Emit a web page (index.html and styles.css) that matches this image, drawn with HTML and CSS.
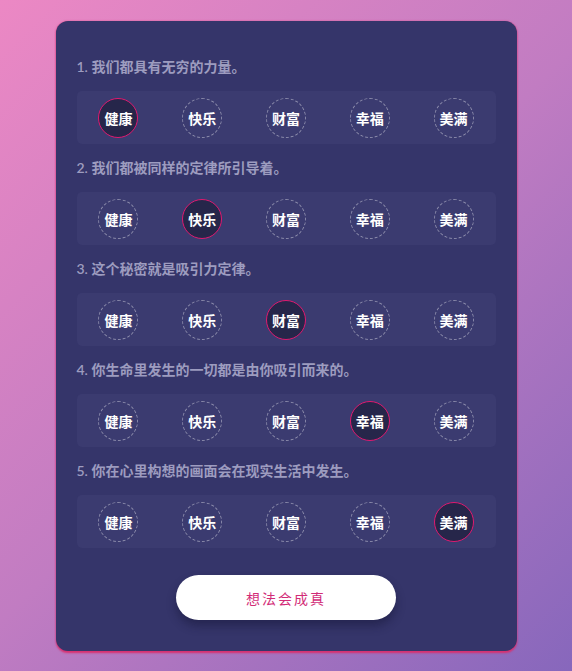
FILE: index.html
```html
<!DOCTYPE html>
<html lang="zh">
<head>
<meta charset="utf-8">
<link rel="stylesheet" href="styles.css">
</head>
<body>
<main class="card">
  <section class="question">
    <p class="label">1. 我们都具有无穷的力量。</p>
    <div class="options">
      <span class="opt selected">健康</span><span class="opt">快乐</span><span class="opt">财富</span><span class="opt">幸福</span><span class="opt">美满</span>
    </div>
  </section>
  <section class="question">
    <p class="label">2. 我们都被同样的定律所引导着。</p>
    <div class="options">
      <span class="opt">健康</span><span class="opt selected">快乐</span><span class="opt">财富</span><span class="opt">幸福</span><span class="opt">美满</span>
    </div>
  </section>
  <section class="question">
    <p class="label">3. 这个秘密就是吸引力定律。</p>
    <div class="options">
      <span class="opt">健康</span><span class="opt">快乐</span><span class="opt selected">财富</span><span class="opt">幸福</span><span class="opt">美满</span>
    </div>
  </section>
  <section class="question">
    <p class="label">4. 你生命里发生的一切都是由你吸引而来的。</p>
    <div class="options">
      <span class="opt">健康</span><span class="opt">快乐</span><span class="opt">财富</span><span class="opt selected">幸福</span><span class="opt">美满</span>
    </div>
  </section>
  <section class="question">
    <p class="label">5. 你在心里构想的画面会在现实生活中发生。</p>
    <div class="options">
      <span class="opt">健康</span><span class="opt">快乐</span><span class="opt">财富</span><span class="opt">幸福</span><span class="opt selected">美满</span>
    </div>
  </section>
  <div class="actions">
    <button class="submit">想法会成真</button>
  </div>
</main>
</body>
</html>
```
FILE: styles.css
```css
html, body {
  margin: 0;
  height: 100%;
}
body {
  background: linear-gradient(135deg, #ec88c4 0%, #c17cc2 50%, #8767bc 100%);
  font-family: "Lato", "Noto Sans CJK SC", sans-serif;
  padding-top: 21px;
  box-sizing: border-box;
}
.card {
  width: 461px;
  margin: 0 auto;
  box-sizing: border-box;
  height: 630px;
  background: #35356a;
  border-radius: 12px;
  padding: 36px 21px 0 21px;
  box-shadow: 0 2px 2px #d8306f, 0 0 2px rgba(216, 48, 111, 0.7);
}
.question {
  display: flex;
  flex-direction: column;
  gap: 14px;
  margin-bottom: 14px;
}
.label {
  margin: 0;
  font-size: 14px;
  line-height: 20px;
  font-weight: 600;
  color: #9d9cbf;
}
.options {
  display: grid;
  grid-template-columns: repeat(5, 1fr);
  background: #3b3b70;
  border-radius: 5px;
  height: 53px;
  align-items: center;
  justify-items: center;
}
.opt {
  width: 40px;
  height: 40px;
  box-sizing: border-box;
  border-radius: 50%;
  border: 1px dashed rgba(255, 255, 255, 0.4);
  display: flex;
  align-items: center;
  justify-content: center;
  color: #ffffff;
  font-size: 14px;
  font-weight: 700;
  font-family: "Noto Sans CJK SC", sans-serif;
}
.opt.selected {
  background: #26264a;
  border: 1px solid #e0196f;
}
.actions {
  display: flex;
  justify-content: center;
  padding-top: 13px;
}
.submit {
  width: 220px;
  height: 45px;
  border: none;
  border-radius: 23px;
  background: #ffffff;
  color: #d22c78;
  font-family: "Noto Sans CJK SC", sans-serif;
  font-size: 14px;
  letter-spacing: 2px;
  box-shadow: 0 6px 10px rgba(20, 20, 50, 0.45);
}
```
